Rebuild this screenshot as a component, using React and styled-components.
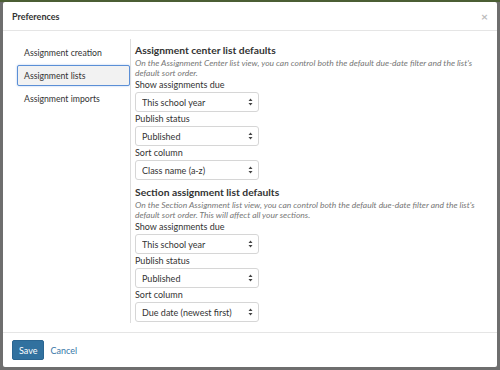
import React from 'react'
import styled, { createGlobalStyle } from 'styled-components'

const GlobalStyle = createGlobalStyle`
  html, body { margin: 0; padding: 0; }
  body {
    width: 500px;
    height: 370px;
    overflow: hidden;
    font-family: Lato, "Open Sans", sans-serif;
    background: #6e6e6e;
  }
`

const navItems = ['Assignment creation', 'Assignment lists', 'Assignment imports']

const sections = [
  {
    title: 'Assignment center list defaults',
    desc: "On the Assignment Center list view, you can control both the default due-date filter and the list's default sort order.",
    fields: [
      ['Show assignments due', 'This school year'],
      ['Publish status', 'Published'],
      ['Sort column', 'Class name (a-z)'],
    ],
  },
  {
    title: 'Section assignment list defaults',
    desc: "On the Section Assignment list view, you can control both the default due-date filter and the list's default sort order. This will affect all your sections.",
    fields: [
      ['Show assignments due', 'This school year'],
      ['Publish status', 'Published'],
      ['Sort column', 'Due date (newest first)'],
    ],
  },
]

function Arrows() {
  return (
    <ArrowIcon width="5" height="8" viewBox="0 0 5 8">
      <path d="M2.5 0.5 L4.5 3 H0.5 Z M2.5 7.5 L4.5 5 H0.5 Z" fill="#444" />
    </ArrowIcon>
  )
}

function SelectBox({ value }) {
  return (
    <SelectWrap>
      <Select defaultValue={value}>
        <option>{value}</option>
      </Select>
      <Arrows />
    </SelectWrap>
  )
}

export default function App() {
  return (
    <>
      <GlobalStyle />
      <Backdrop>
        <Modal>
          <Header>
            <Title>Preferences</Title>
            <Close>×</Close>
          </Header>
          <Body>
            <Nav>
              {navItems.map((item) => (
                <NavItem key={item} active={item === 'Assignment lists'}>
                  {item}
                </NavItem>
              ))}
            </Nav>
            <Content>
              {sections.map((s) => (
                <Section key={s.title}>
                  <SectionTitle>{s.title}</SectionTitle>
                  <Desc>{s.desc}</Desc>
                  {s.fields.map(([label, value]) => (
                    <Field key={label}>
                      <Label>{label}</Label>
                      <SelectBox value={value} />
                    </Field>
                  ))}
                </Section>
              ))}
            </Content>
          </Body>
          <Footer>
            <SaveButton>Save</SaveButton>
            <CancelLink>Cancel</CancelLink>
          </Footer>
        </Modal>
      </Backdrop>
    </>
  )
}

const Backdrop = styled.div`
  width: 500px;
  height: 370px;
  box-sizing: border-box;
  padding: 2px 3px 3px 3px;
  background: linear-gradient(#4b5e34 0 2px, #6e6e6e 2px);
`

const Modal = styled.div`
  height: 100%;
  background: #fff;
  border-radius: 2px;
  display: flex;
  flex-direction: column;
  overflow: hidden;
`

const Header = styled.div`
  height: 28px;
  flex: none;
  display: flex;
  align-items: center;
  justify-content: space-between;
  padding: 0 9px 0 9px;
  border-bottom: 1px solid #e5e5e5;
`

const Title = styled.div`
  font-size: 9px;
  font-weight: 700;
  color: #333;
`

const Close = styled.div`
  font-size: 12px;
  color: #bbb;
  font-weight: 700;
`

const Body = styled.div`
  flex: 1;
  min-height: 0;
  display: flex;
  padding: 8px 14px 9px 14px;
`

const Nav = styled.div`
  width: 113px;
  flex: none;
  display: flex;
  flex-direction: column;
  gap: 2px;
  padding-top: 3px;
`

const NavItem = styled.div`
  height: 19px;
  display: flex;
  align-items: center;
  padding-left: 6px;
  font-size: 8.7px;
  color: #333;
  border-radius: 2px;
  border: 1px solid ${(p) => (p.active ? '#5b8fd6' : 'transparent')};
  background: ${(p) => (p.active ? '#f2f2f2' : 'transparent')};
  box-shadow: ${(p) => (p.active ? '0 0 2px rgba(80,140,220,0.5)' : 'none')};
`

const Content = styled.div`
  flex: 1;
  border-left: 1px solid #ddd;
  padding-left: 4px;
  display: flex;
  flex-direction: column;
`

const Section = styled.div`
  display: flex;
  flex-direction: column;
`

const SectionTitle = styled.div`
  font-size: 10.3px;
  font-weight: 700;
  color: #333;
  line-height: 14px;
  margin-top: 4px;
  margin-bottom: 1px;
`

const Desc = styled.div`
  font-size: 8.5px;
  font-style: italic;
  color: #777;
  line-height: 10px;
  margin-bottom: 1px;
`

const Field = styled.div`
  display: flex;
  flex-direction: column;
`

const Label = styled.div`
  font-size: 9px;
  color: #333;
  line-height: 12px;
  margin-bottom: 1px;
`

const SelectWrap = styled.div`
  position: relative;
  width: 124px;
  margin-bottom: 1px;
`

const Select = styled.select`
  display: block;
  appearance: none;
  width: 100%;
  height: 20px;
  box-sizing: border-box;
  padding: 0 0 0 6px;
  border: 1px solid #d6d6d6;
  border-radius: 3px;
  background: #fff;
  font-family: Lato, sans-serif;
  font-size: 9px;
  color: #333;
  outline: none;
`

const ArrowIcon = styled.svg`
  position: absolute;
  right: 6px;
  top: 6px;
  pointer-events: none;
`

const Footer = styled.div`
  height: 34px;
  flex: none;
  border-top: 1px solid #e5e5e5;
  display: flex;
  align-items: center;
  gap: 6px;
  padding: 0 9px;
`

const SaveButton = styled.button`
  height: 20px;
  padding: 0 6px;
  border: 1px solid #2a6591;
  border-radius: 2px;
  background: #31719f;
  color: #fff;
  font-family: Lato, sans-serif;
  font-size: 9px;
`

const CancelLink = styled.a`
  font-size: 9px;
  color: #3777a8;
`
